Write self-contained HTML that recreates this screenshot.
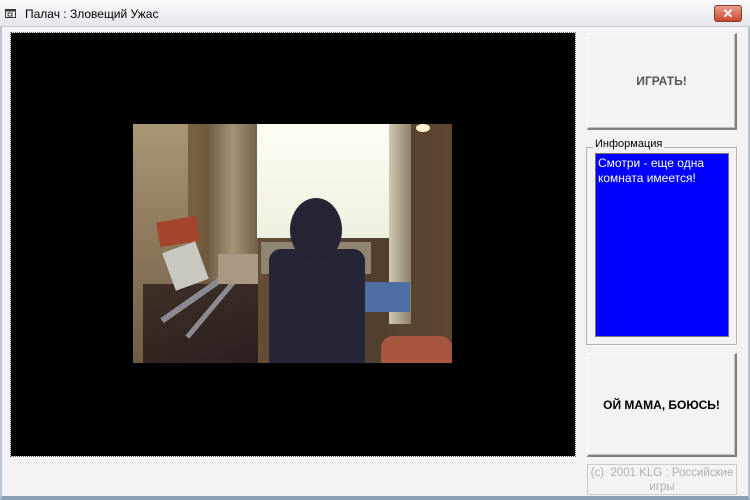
<!DOCTYPE html>
<html><head><meta charset="utf-8"><style>
*{margin:0;padding:0;box-sizing:border-box}
body{width:750px;height:500px;overflow:hidden;background:#f4f2f5;font-family:"Liberation Sans",sans-serif;position:relative}
.abs{position:absolute}
.title{left:0;top:0;width:750px;height:27px;background:linear-gradient(#fbfbfc,#e3e6ec);border-bottom:1px solid #c9ced6}
.win{left:0;top:27px;width:750px;height:473px;border-left:2px solid #b8c6d4;border-right:2px solid #b8c6d4;border-bottom:4px solid #8aa0b4}
.btn{background:#f4f2f5;border-top:1px solid #fff;border-left:1px solid #fff;border-right:2px solid #808080;border-bottom:2px solid #808080;box-shadow:inset -1px -1px 0 #c0c0c0;display:flex;align-items:center;justify-content:center;font-weight:bold;font-size:12px}
</style></head><body>
<div class="abs title"></div>
<svg class="abs" style="left:5px;top:8px" width="12" height="11"><rect x="0.5" y="1.5" width="10" height="8" fill="#fff" stroke="#333"/><rect x="0.5" y="1.5" width="10" height="2" fill="#333"/><rect x="3" y="5" width="4" height="3" fill="none" stroke="#333"/></svg>
<div class="abs" style="left:25px;top:7px;font-size:12px;color:#000">Палач : Зловещий Ужас</div>
<div class="abs" style="left:714px;top:5px;width:28px;height:17px;border-radius:3px;background:linear-gradient(#e9a08c,#c8472f);border:1px solid #8a3a2c;color:#fff;font-weight:bold;font-size:13px;text-align:center;line-height:15px">✕</div>
<div class="abs win"></div>
<div class="abs" style="left:11px;top:33px;width:564px;height:423px;background:#000;outline:1px dotted #666"></div>
<div class="abs" style="left:133px;top:124px;width:319px;height:239px;overflow:hidden;background:linear-gradient(90deg,#8a7352,#6a5238 30%,#4e3f2f 70%,#5e4630)">
 <div class="abs" style="left:0;top:0;width:55px;height:239px;background:linear-gradient(#a89674,#705c44)"></div>
 <div class="abs" style="left:75px;top:0;width:50px;height:200px;background:linear-gradient(90deg,#6e5d45,#a39476,#6f604b)"></div>
 <div class="abs" style="left:124px;top:0;width:136px;height:114px;background:linear-gradient(#fdfdf6,#eef0de)"></div>
 <div class="abs" style="left:256px;top:0;width:22px;height:200px;background:linear-gradient(90deg,#cfc9b2,#8d8068)"></div>
 <div class="abs" style="left:128px;top:118px;width:110px;height:32px;background:#8f8572"></div>
 <div class="abs" style="left:182px;top:158px;width:95px;height:30px;background:#4f6ea4"></div>
 <div class="abs" style="left:10px;top:160px;width:115px;height:79px;background:linear-gradient(160deg,#3e2f28,#2a201d);"></div>
 <div class="abs" style="left:20px;top:165px;width:100px;height:6px;background:#8c8a90;transform:rotate(-35deg)"></div>
 <div class="abs" style="left:40px;top:180px;width:80px;height:5px;background:#8c8a90;transform:rotate(-50deg)"></div>
 <div class="abs" style="left:25px;top:95px;width:40px;height:25px;background:#a5452e;transform:rotate(-10deg)"></div>
 <div class="abs" style="left:35px;top:122px;width:35px;height:40px;background:#c8c8c0;transform:rotate(-20deg)"></div>
 <div class="abs" style="left:85px;top:130px;width:40px;height:30px;background:#a99880"></div>
 <div class="abs" style="left:136px;top:125px;width:96px;height:114px;background:#262535;border-radius:12px 12px 0 0"></div>
 <div class="abs" style="left:157px;top:74px;width:52px;height:64px;background:#262434;border-radius:50%"></div>
 <div class="abs" style="left:248px;top:212px;width:71px;height:27px;background:#a7573f;border-radius:12px 12px 0 0"></div>
 <div class="abs" style="left:283px;top:0;width:14px;height:8px;background:#fff3d0;border-radius:50%"></div>
</div>
<div class="abs btn" style="left:587px;top:33px;width:150px;height:97px;color:#555">ИГРАТЬ!</div>
<div class="abs" style="left:586px;top:147px;width:151px;height:198px;border:1px solid #b0b0b0;box-shadow:1px 1px 0 #fff"></div>
<div class="abs" style="left:593px;top:138px;padding:0 2px;background:#f4f2f5;font-size:11px">Информация</div>
<div class="abs" style="left:595px;top:153px;width:134px;height:184px;background:#0000ff;border:1px solid #777;color:#fff;font-size:12px;line-height:15px;padding:2px 2px">Смотри - еще одна комната имеется!</div>
<div class="abs btn" style="left:587px;top:353px;width:150px;height:104px;color:#000">ОЙ МАМА, БОЮСЬ!</div>
<div class="abs" style="left:587px;top:464px;width:150px;height:31px;border:1px solid #ccc;color:#b0b0b0;font-size:11.5px;text-align:center;line-height:14px;padding-top:1px;white-space:nowrap">(c)&nbsp; 2001 KLG : Российские<br>игры</div>
</body></html>
